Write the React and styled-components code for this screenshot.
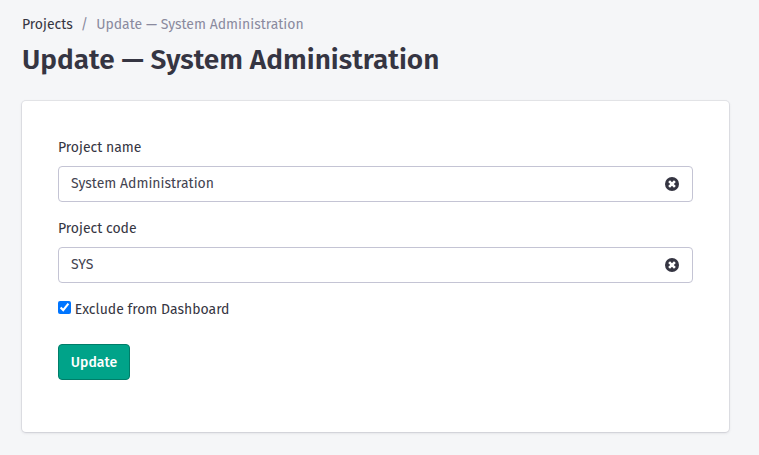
import React, { useState } from "react";
import styled, { createGlobalStyle } from "styled-components";

const GlobalStyle = createGlobalStyle`
  *, *::before, *::after { box-sizing: border-box; }
  body {
    margin: 0;
    background: #f5f6f8;
    color: #353542;
    font: 14px/20px "Fira Sans", "Noto Sans", sans-serif;
  }
`;

const Page = styled.main`
  display: flex;
  flex-direction: column;
  min-height: 100vh;
  padding: 15px 30px 22px 22px;
`;

const Breadcrumbs = styled.nav`
  display: flex;
  height: 20px;
  gap: 8px;
  color: #8a8a9e;
  white-space: nowrap;
`;

const Crumb = styled.span`
  color: ${({ $current }) => ($current ? "#8a8a9e" : "#353542")};
`;

const Title = styled.h1`
  margin: 6px 0 22px;
  height: 38px;
  font-size: 28px;
  line-height: 38px;
  font-weight: 600;
  white-space: nowrap;
`;

const Card = styled.form`
  display: flex;
  flex-direction: column;
  align-items: flex-start;
  height: 331px;
  padding: 36px;
  background: #fff;
  border-radius: 4px;
  box-shadow: 0 0 0 1px rgba(53, 53, 80, 0.08), 0 1px 3px rgba(53, 53, 80, 0.16);
`;

const Field = styled.div`
  display: flex;
  flex-direction: column;
  width: 100%;
  gap: 7px;
  margin-bottom: 16px;
`;

const Label = styled.label`
  height: 22px;
  line-height: 22px;
`;

const InputBox = styled.div`
  display: flex;
  align-items: center;
  height: 36px;
  padding: 0 13px 0 12px;
  border: 1px solid #c4c4d4;
  border-radius: 4px;
  background: #fff;
`;

const Input = styled.input`
  flex: 1;
  min-width: 0;
  height: 34px;
  padding: 0 0 1px;
  border: 0;
  outline: 0;
  background: transparent;
  color: #434350;
  font: inherit;
`;

const ClearButton = styled.button`
  display: flex;
  padding: 0;
  border: 0;
  background: none;
  color: #353542;
`;

const CheckRow = styled.label`
  display: block;
  height: 22px;
  line-height: 22px;
  white-space: nowrap;
`;

const Checkbox = styled.input`
  width: 13px;
  height: 13px;
  margin: 2px 0 0;
  vertical-align: top;
`;

const Submit = styled.button`
  width: 72px;
  height: 36px;
  margin-top: 23px;
  padding: 1px 0 0;
  border: 1px solid #007d69;
  border-radius: 4px;
  background: #00a389;
  color: #fff;
  font: inherit;
  font-weight: 500;
`;

function ClearIcon() {
  return (
    <svg width="14" height="14" viewBox="0 0 14 14" aria-hidden="true">
      <circle cx="7" cy="7" r="7" fill="currentColor" />
      <path d="M4.1 4.1l5.8 5.8M9.9 4.1L4.1 9.9" stroke="#fff" strokeWidth="2.6" />
    </svg>
  );
}

function TextField({ id, label, initial }) {
  const [value, setValue] = useState(initial);
  return (
    <Field>
      <Label htmlFor={id}>{label}</Label>
      <InputBox>
        <Input id={id} value={value} onChange={(e) => setValue(e.target.value)} />
        <ClearButton type="button" aria-label="Clear" onClick={() => setValue("")}>
          <ClearIcon />
        </ClearButton>
      </InputBox>
    </Field>
  );
}

export default function App() {
  return (
    <>
      <GlobalStyle />
      <Page>
        <Breadcrumbs>
          <Crumb>Projects</Crumb>
          <span>/</span>
          <Crumb $current>Update — System Administration</Crumb>
        </Breadcrumbs>
        <Title>Update — System Administration</Title>
        <Card onSubmit={(e) => e.preventDefault()}>
          <TextField id="name" label="Project name" initial="System Administration" />
          <TextField id="code" label="Project code" initial="SYS" />
          <CheckRow>
            <Checkbox type="checkbox" defaultChecked /> Exclude from Dashboard
          </CheckRow>
          <Submit>Update</Submit>
        </Card>
      </Page>
    </>
  );
}
